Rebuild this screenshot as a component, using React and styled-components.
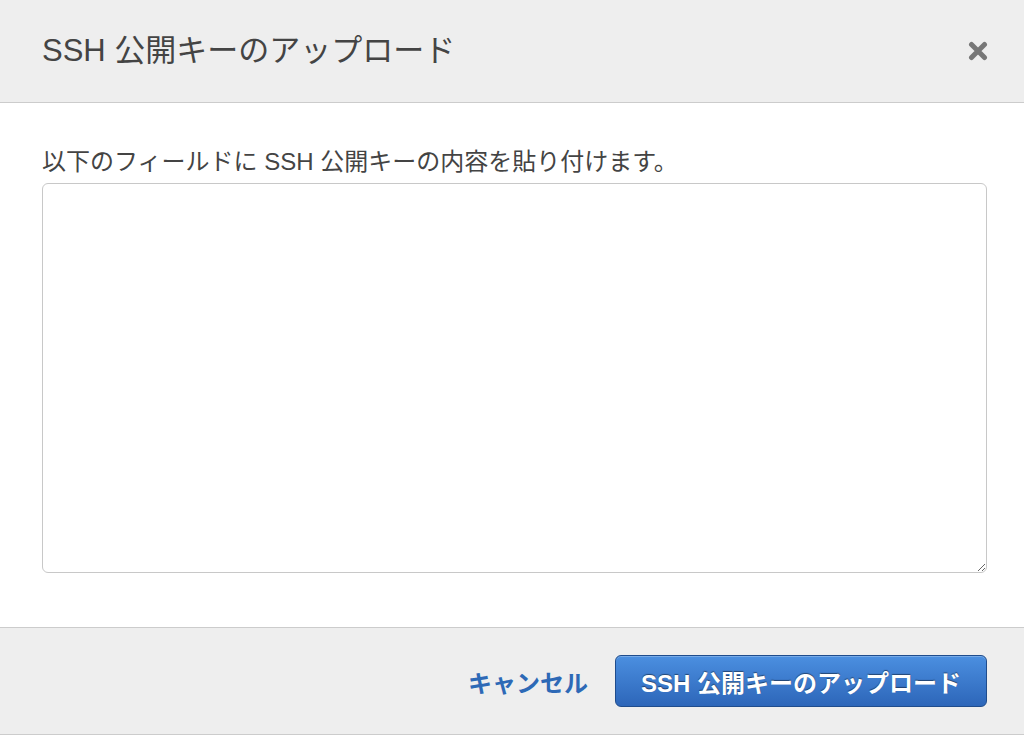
import React from "react";
import styled, { createGlobalStyle } from "styled-components";

const Global = createGlobalStyle`
  html, body { margin: 0; padding: 0; background: #ffffff; }
  body {
    font-family: "Liberation Sans", "Noto Sans CJK JP", sans-serif;
    color: #444444;
  }
  * { box-sizing: border-box; }
`;

const Modal = styled.div`
  width: 1024px;
  height: 736px;
  display: flex;
  flex-direction: column;
  background: #ffffff;
`;

const Header = styled.div`
  height: 103px;
  flex: none;
  display: flex;
  align-items: center;
  justify-content: space-between;
  padding: 0 36px 0 42px;
  background: #eeeeee;
  border-bottom: 1px solid #cccccc;
`;

const Title = styled.h1`
  margin: 0;
  font-size: 31px;
  font-weight: 400;
  line-height: 36px;
  color: #444444;
`;

const CloseButton = styled.button`
  border: 0;
  padding: 0;
  background: none;
  width: 20px;
  height: 20px;
  display: flex;
  cursor: pointer;
`;

const Body = styled.div`
  flex: 1;
  display: flex;
  flex-direction: column;
  padding: 44px 37px 54px 42px;
`;

const Label = styled.label`
  display: block;
  font-size: 24px;
  line-height: 30px;
  color: #444444;
  margin-bottom: 6px;
`;

const TextArea = styled.textarea`
  flex: 1;
  width: 100%;
  border: 1px solid #c8c8c8;
  border-radius: 6px;
  background: #ffffff;
  font-family: inherit;
  font-size: 20px;
  padding: 8px;
  outline: none;
  resize: vertical;
`;

const Footer = styled.div`
  height: 108px;
  flex: none;
  display: flex;
  align-items: center;
  justify-content: flex-end;
  gap: 27px;
  padding: 0 37px 0 42px;
  background: #eeeeee;
  border-top: 1px solid #cccccc;
  border-bottom: 1px solid #cccccc;
  margin-bottom: 1px;
`;

const CancelLink = styled.button`
  border: 0;
  background: none;
  padding: 0;
  font-family: inherit;
  font-size: 24px;
  font-weight: 700;
  color: #2d69b6;
  cursor: pointer;
`;

const PrimaryButton = styled.button`
  height: 52px;
  padding: 0 25px;
  border: 1px solid #1f4c8c;
  border-radius: 6px;
  background: linear-gradient(#4b8fe0, #2d66b9);
  box-shadow: inset 0 1px 0 rgba(255, 255, 255, 0.25);
  font-family: inherit;
  font-size: 24px;
  font-weight: 700;
  color: #ffffff;
  text-shadow: 0 -1px 1px rgba(0, 0, 0, 0.45);
  cursor: pointer;
`;

function CloseIcon() {
  return (
    <svg width="20" height="20" viewBox="0 0 20 20">
      <path
        d="M3.5 3.5 L16.5 16.5 M16.5 3.5 L3.5 16.5"
        stroke="#777777"
        strokeWidth="5"
        strokeLinecap="round"
        fill="none"
      />
    </svg>
  );
}

export default function App() {
  return (
    <>
      <Global />
      <Modal>
        <Header>
          <Title>SSH 公開キーのアップロード</Title>
          <CloseButton aria-label="閉じる">
            <CloseIcon />
          </CloseButton>
        </Header>
        <Body>
          <Label htmlFor="sshkey">以下のフィールドに SSH 公開キーの内容を貼り付けます。</Label>
          <TextArea id="sshkey" />
        </Body>
        <Footer>
          <CancelLink>キャンセル</CancelLink>
          <PrimaryButton>SSH 公開キーのアップロード</PrimaryButton>
        </Footer>
      </Modal>
    </>
  );
}
